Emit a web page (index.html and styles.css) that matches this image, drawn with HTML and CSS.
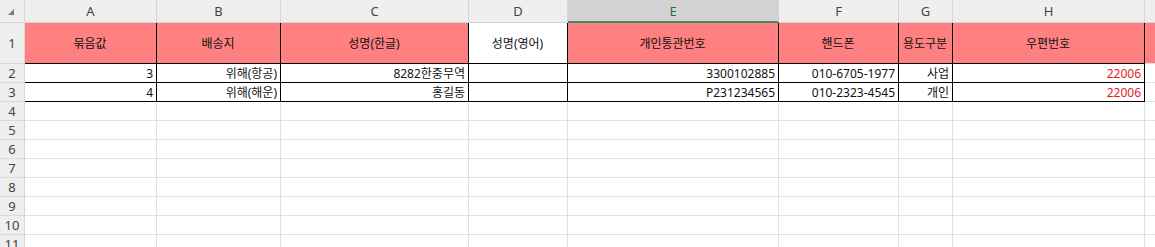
FILE: index.html
```html
<!DOCTYPE html>
<html lang="ko">
<head>
    <meta charset="UTF-8">
    <meta name="viewport" content="width=device-width, initial-scale=1.0">
    <title>시트1</title>
    <link rel="stylesheet" href="styles.css">
</head>
<body>
    <div class="sheet">
        <div class="row head">
            <div class="corner"><span class="tri"></span></div>
            <div class="col">A</div>
            <div class="col">B</div>
            <div class="col">C</div>
            <div class="col">D</div>
            <div class="col sel">E</div>
            <div class="col">F</div>
            <div class="col">G</div>
            <div class="col">H</div>
            <div class="col"></div>
        </div>
        <div class="row title">
            <div class="num">1</div>
            <div class="cell th">묶음값</div>
            <div class="cell th">배송지</div>
            <div class="cell th">성명(한글)</div>
            <div class="cell th plain">성명(영어)</div>
            <div class="cell th">개인통관번호</div>
            <div class="cell th">핸드폰</div>
            <div class="cell th">용도구분</div>
            <div class="cell th">우편번호</div>
            <div class="cell fill"></div>
        </div>
        <div class="row">
            <div class="num">2</div>
            <div class="cell box">3</div>
            <div class="cell box">위해(항공)</div>
            <div class="cell box">8282한중무역</div>
            <div class="cell box"></div>
            <div class="cell box">3300102885</div>
            <div class="cell box">010-6705-1977</div>
            <div class="cell box">사업</div>
            <div class="cell box red">22006</div>
            <div class="cell"></div>
        </div>
        <div class="row">
            <div class="num">3</div>
            <div class="cell box">4</div>
            <div class="cell box">위해(해운)</div>
            <div class="cell box">홍길동</div>
            <div class="cell box"></div>
            <div class="cell box">P231234565</div>
            <div class="cell box">010-2323-4545</div>
            <div class="cell box">개인</div>
            <div class="cell box red">22006</div>
            <div class="cell"></div>
        </div>
        <div class="row">
            <div class="num">4</div>
            <div class="cell"></div><div class="cell"></div><div class="cell"></div><div class="cell"></div><div class="cell"></div><div class="cell"></div><div class="cell"></div><div class="cell"></div><div class="cell"></div>
        </div>
        <div class="row">
            <div class="num">5</div>
            <div class="cell"></div><div class="cell"></div><div class="cell"></div><div class="cell"></div><div class="cell"></div><div class="cell"></div><div class="cell"></div><div class="cell"></div><div class="cell"></div>
        </div>
        <div class="row">
            <div class="num">6</div>
            <div class="cell"></div><div class="cell"></div><div class="cell"></div><div class="cell"></div><div class="cell"></div><div class="cell"></div><div class="cell"></div><div class="cell"></div><div class="cell"></div>
        </div>
        <div class="row">
            <div class="num">7</div>
            <div class="cell"></div><div class="cell"></div><div class="cell"></div><div class="cell"></div><div class="cell"></div><div class="cell"></div><div class="cell"></div><div class="cell"></div><div class="cell"></div>
        </div>
        <div class="row">
            <div class="num">8</div>
            <div class="cell"></div><div class="cell"></div><div class="cell"></div><div class="cell"></div><div class="cell"></div><div class="cell"></div><div class="cell"></div><div class="cell"></div><div class="cell"></div>
        </div>
        <div class="row">
            <div class="num">9</div>
            <div class="cell"></div><div class="cell"></div><div class="cell"></div><div class="cell"></div><div class="cell"></div><div class="cell"></div><div class="cell"></div><div class="cell"></div><div class="cell"></div>
        </div>
        <div class="row">
            <div class="num">10</div>
            <div class="cell"></div><div class="cell"></div><div class="cell"></div><div class="cell"></div><div class="cell"></div><div class="cell"></div><div class="cell"></div><div class="cell"></div><div class="cell"></div>
        </div>
        <div class="row">
            <div class="num">11</div>
            <div class="cell"></div><div class="cell"></div><div class="cell"></div><div class="cell"></div><div class="cell"></div><div class="cell"></div><div class="cell"></div><div class="cell"></div><div class="cell"></div>
        </div>
    </div>
</body>
</html>
```

FILE: styles.css
```css
body {
    margin: 0;
    background: #fff;
    font-family: "Noto Sans", "Noto Sans CJK KR", sans-serif;
    font-size: 12px;
    color: #111;
    overflow: hidden;
}
.sheet {
    display: flex;
    flex-direction: column;
    width: 1300px;
}
.row {
    display: grid;
    grid-template-columns: 25px 132px 124px 188px 99px 211px 120px 54px 192px 1fr;
    height: 19px;
}
.row > div {
    box-sizing: border-box;
    border-right: 1px solid #e1e1e1;
    border-bottom: 1px solid #e1e1e1;
    overflow: hidden;
    white-space: nowrap;
}

/* column letters */
.head { height: 23px; }
.head > div {
    background: #efefef;
    border-right-color: #d6d6d6;
    border-bottom-color: #d4d4d4;
}
.col {
    display: flex;
    align-items: center;
    justify-content: center;
    color: #444;
    font-family: "Noto Sans", sans-serif;
    font-size: 13px;
}
.col.sel {
    background: #d3d3d3;
    color: #217346;
    border-bottom: 2px solid #3f8a62;
}
.corner {
    position: relative;
}
.tri {
    position: absolute;
    left: 8px;
    top: 9px;
    width: 0;
    height: 0;
    border-left: 6px solid transparent;
    border-bottom: 6px solid #7a7a7a;
}

/* row numbers */
.num {
    background: #efefef;
    border-right-color: #d6d6d6 !important;
    border-bottom-color: #dadada !important;
    color: #444;
    font-family: "Noto Sans", sans-serif;
    font-size: 13px;
    display: flex;
    align-items: center;
    justify-content: center;
}

.title { height: 41px; }
.cell {
    display: flex;
    align-items: flex-end;
    justify-content: flex-end;
    padding: 0 3px 0 2px;
    line-height: 17px;
}
.th {
    background: #ff8080;
    justify-content: center;
    align-items: center;
    border-right-color: #000 !important;
    border-bottom-color: #000 !important;
}
.th.plain { background: #fff; }
.fill { background: #ff8080; border-right-color: #ff8080 !important; }
.box {
    border-right-color: #000 !important;
    border-bottom-color: #000 !important;
}
.red { color: #e21b1b; }
```
